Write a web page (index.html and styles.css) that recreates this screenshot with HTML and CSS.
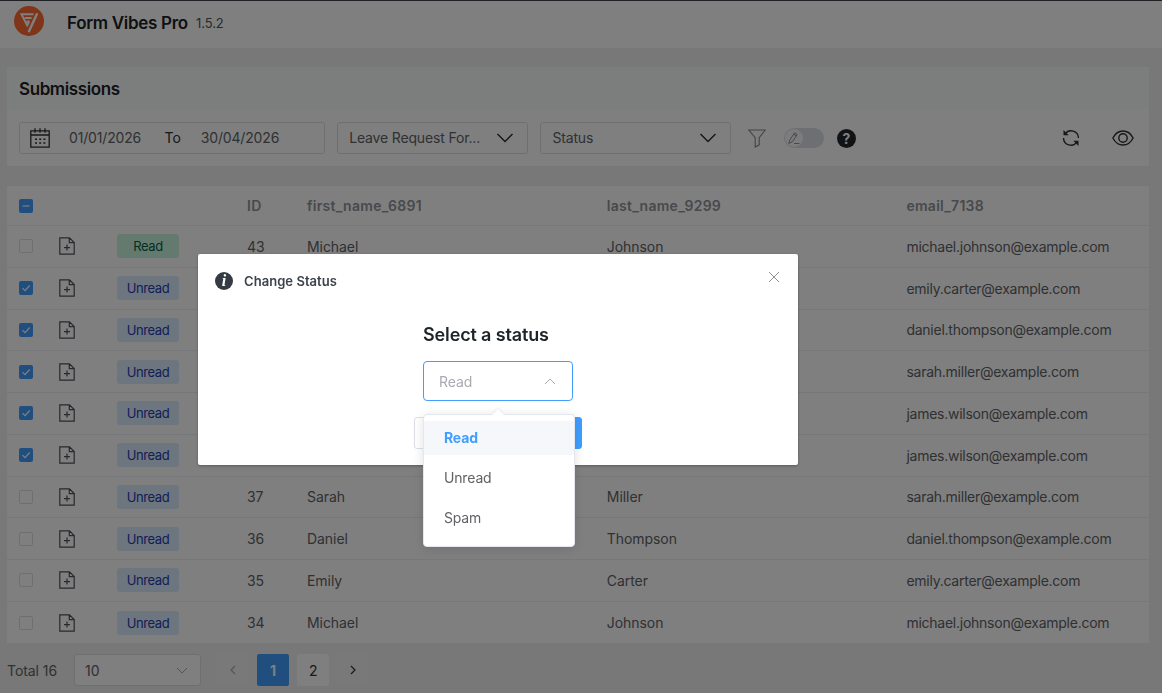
FILE: index.html
```html
<!DOCTYPE html>
<html lang="en">
<head>
<meta charset="utf-8">
<title>Form Vibes Pro</title>
<link rel="stylesheet" href="styles.css">
</head>
<body>
<svg class="defs" width="0" height="0">
  <symbol id="doc" viewBox="0 0 16 18"><path d="M.8.8h9.700l4.700 4.700v11.700H.8zM10.300 1v4.700H15M8 7.600v6M5 10.600h6" fill="none" stroke="currentColor" stroke-width="1.200"/></symbol>
  <symbol id="down" viewBox="0 0 18 10"><path d="M1.500 1l7.500 7.500L16.500 1" fill="none" stroke="currentColor" stroke-width="1.500"/></symbol>
</svg>
<div class="page">
  <header class="topbar">
    <svg class="logo" viewBox="0 0 30 30"><circle cx="15" cy="15" r="15" fill="#ff6a33"/><path d="M19.500 8.200H7.400l5.800 11.200 1.900-3.600M10.800 12h6.800M12.500 15.500h3.200" fill="none" stroke="#fff" stroke-width="1.900"/><path d="M22.800 8.200L15 25.200" fill="none" stroke="#fff" stroke-width="2.500" stroke-linecap="round"/></svg>
    <h1 class="brand">Form Vibes Pro</h1><span class="version">1.5.2</span>
  </header>
  <section class="panel">
    <h2 class="panel-title">Submissions</h2>
    <div class="filters">
      <div class="dates">
        <svg class="calendar" viewBox="0 0 20 20"><path d="M.8 2.800h18.400v16.400H.8zM.8 7h18.400M5 .3v4.500M10 .3v4.500M15 .3v4.500" fill="none" stroke="#303133" stroke-width="1.300"/><path d="M5 11.300h10.500M5 15h10.500" stroke="#303133" stroke-width="1.600" stroke-dasharray="2 2.200"/></svg>
        <span class="date">01/01/2026</span><span class="to">To</span><span class="date">30/04/2026</span>
      </div>
      <div class="select"><span>Leave Request For...</span><svg class="chev"><use href="#down"/></svg></div>
      <div class="select"><span>Status</span><svg class="chev"><use href="#down"/></svg></div>
      <svg class="funnel" viewBox="0 0 18 19"><path d="M.8 1h16.400l-6 7.600v7.200l-4 2.200V8.600z" fill="none" stroke="#85888e" stroke-width="1.100"/></svg>
      <div class="toggle"><div class="knob"><svg viewBox="0 0 14 14"><path d="M1.800 12.500l1-3.500L7.600 1.800l2.600 1.700-4.800 7.200zM6.700 3.200l2.600 1.700M7 12.500h5.500" fill="none" stroke="#909399"/></svg></div></div>
      <div class="help">?</div>
      <div class="spacer"></div>
      <svg class="refresh" viewBox="0 0 18 18"><path d="M3.200 4.800C7.100-.8 16.300 1.800 16.500 9.100M1.500 8.900C1.700 16.200 10.900 18.800 14.800 13.200" fill="none" stroke="#303133" stroke-width="1.400"/><path d="M1.500 1v5.200h5.200zM16.500 17v-5.200h-5.200z" fill="#303133"/></svg>
      <svg class="eye" viewBox="0 0 22 16"><path d="M.9 8C5.500-1.300 16.500-1.300 21.100 8 16.500 17.300 5.500 17.300.9 8z" fill="none" stroke="#303133" stroke-width="1.400"/><circle cx="11" cy="8" r="4.200" fill="none" stroke="#303133" stroke-width="1.400"/></svg>
    </div>
  </section>
  <main class="table" id="table">
    <div class="row head"><span class="check on"><svg viewBox="0 0 14 14"><path d="M3.500 7h7" fill="none" stroke="#fff" stroke-width="1.200"/></svg></span><span></span><span></span><span>ID</span><span>first_name_6891</span><span>last_name_9299</span><span>email_7138</span></div>
  </main>
  <footer class="pager">
    <span class="total">Total 16</span>
    <div class="size"><span>10</span><svg class="chev-s" viewBox="0 0 12 7"><path d="M1 1l5 5 5-5" fill="none" stroke="currentColor"/></svg></div>
    <span class="pg faint"><svg viewBox="0 0 8 10"><path d="M6 1L2 5l4 4" fill="none" stroke="#a8abb2" stroke-width="1.200"/></svg></span>
    <span class="pg active">1</span><span class="pg">2</span>
    <span class="pg faint"><svg viewBox="0 0 8 10"><path d="M2 1l4 4-4 4" fill="none" stroke="#303133" stroke-width="1.200"/></svg></span>
  </footer>
</div>
<div class="overlay">
  <div class="modal">
    <div class="modal-head">
      <span class="info">i</span><span class="modal-title">Change Status</span>
      <svg class="close" viewBox="0 0 12 12"><path d="M1 1l10 10M11 1L1 11" stroke="#909399" stroke-width="1"/></svg>
    </div>
    <div class="modal-body">
      <h3 class="prompt">Select a status</h3>
      <div class="status-select"><span>Read</span><svg class="chev-s up" viewBox="0 0 12 7"><path d="M1 1l5 5 5-5" fill="none" stroke="currentColor"/></svg></div>
    </div>
    <div class="actions"><span class="btn"></span><span class="btn primary"></span></div>
    <div class="menu"><div class="item selected">Read</div><div class="item">Unread</div><div class="item">Spam</div></div>
  </div>
</div>
<script src="table.js"></script>
</body>
</html>
```

FILE: styles.css
```css
* { box-sizing: border-box; }
body { margin: 0; font-family: Inter, "Liberation Sans", sans-serif; font-size: 14px; letter-spacing: -.06px; color: #606266; overflow: hidden; }
h1, h2, h3 { margin: 0; color: #1d2327; font-weight: 600; }
svg { flex: none; display: block; }
.defs { position: absolute; }
.page { height: 693px; background: #f0f0f1; display: flex; flex-direction: column; }
.topbar { height: 48px; background: #fff; border-top: 1px solid #3c434a; display: flex; align-items: center; padding: 0 14px 4px; }
.logo { width: 30px; height: 30px; margin-top: -3px; }
.brand { font-size: 17px; margin-left: 23px; letter-spacing: -.3px; }
.version { font-size: 13px; margin-left: 8px; color: #50555a; }
.panel { margin: 19px 13px 0 7px; height: 99px; background: #fff; }
.panel-title { height: 43px; background: #f9fdfb; padding-left: 12px; font-size: 17px; line-height: 45px; letter-spacing: -.4px; }
.filters { display: flex; align-items: center; padding: 12px 15px 0 12px; }
.dates { width: 306px; height: 32px; border: 1px solid #dcdfe6; border-radius: 3px; display: flex; align-items: center; padding-left: 10px; }
.date { letter-spacing: -.16px; width: 73px; padding-bottom: 1px; }
.calendar { width: 20px; height: 20px; margin-right: 19px; }
.to { color: #303133; margin: 0 20px 0 22.5px; padding-bottom: 1px; }
.select { width: 191px; height: 32px; border: 1px solid #dcdfe6; border-radius: 3px; margin-left: 12.2px; padding: 0 13px 0 11px; display: flex; align-items: center; justify-content: space-between; letter-spacing: -.16px; }
.select span { padding-bottom: 1px; }
.chev { width: 18px; height: 10px; color: #303133; }
.funnel { width: 18px; height: 19px; margin-left: 16.5px; }
.toggle { width: 40px; height: 20px; border-radius: 10px; background: #dcdfe6; margin-left: 18px; padding: 1px; }
.knob { width: 18px; height: 18px; background: #f8f8fa; border-radius: 9px; padding: 2px; }
.help { width: 19px; height: 19px; border-radius: 50%; background: #23282d; color: #fff; font-weight: 700; line-height: 19px; text-align: center; margin-left: 13px; }
.spacer { flex: 1; }
.refresh { width: 18px; height: 18px; }
.eye { width: 22px; height: 16px; margin-left: 32px; }
.table { margin: 20px 13px 0 7px; background: #fff; height: 457px; flex: none; }
.row { display: grid; grid-template-columns: 40px 58px 130px 60px 299.8px 299.6px 1fr; padding-left: 12px; height: 41.75px; align-items: center; border-bottom: 1px solid #ebeef5; }
.row:last-child { border-bottom: 0; }
.row span:last-child { letter-spacing: -.25px; }
.row.head { height: 40px; color: #909399; font-weight: 600; }
.row.head span { letter-spacing: .28px; }
.check { width: 14px; height: 14px; border: 1px solid #dcdfe6; border-radius: 2px; background: #fff; }
.on { background: #409eff; border: 0; }
.doc { width: 16px; height: 18px; color: #50535a; }
.tag { width: 62px; height: 24px; border-radius: 3px; font-size: 13px; letter-spacing: -.4px; line-height: 25px; text-align: center; background: #dbeafe; color: #1e40af; }
.tag.read { background: #c9f5dc; color: #065f46; }
.pager { display: flex; align-items: center; padding: 11px 7px 0; height: 43px; }
.total { width: 67px; }
.size { width: 127px; height: 32px; border: 1px solid #dcdfe6; border-radius: 3px; background: #fff; display: flex; align-items: center; justify-content: space-between; padding: 0 12px 0 10px; margin-right: 16px; }
.chev-s { width: 12px; height: 7px; color: #a8abb2; }
.pg { width: 32px; height: 32px; border-radius: 2px; background: #fff; color: #303133; margin-right: 8.1px; display: flex; align-items: center; justify-content: center; }
.pg svg { width: 8px; height: 10px; }
.faint { background: #f2f2f3; }
.active { background: #409eff; color: #fff; font-weight: 700; }
.overlay { position: fixed; inset: 0; background: rgba(0, 0, 0, .5); }
.modal { position: absolute; left: 198px; top: 254px; width: 600px; height: 211px; background: #fff; border-radius: 2px; box-shadow: 0 1px 3px rgba(0, 0, 0, .3); }
.modal-head { display: flex; align-items: center; padding: 17px 18px 0 17px; height: 36px; }
.info { width: 18px; height: 18px; border-radius: 50%; background: #353b44; color: #fff; font: italic bold 16px/18px "Liberation Serif", serif; text-align: center; }
.modal-title { margin-left: 11px; font-size: 13px; font-weight: 600; letter-spacing: .05px; color: #3c434a; flex: 1; }
.close { width: 12px; height: 12px; margin-top: -7px; }
.modal-body { padding: 34px 0 0 225px; }
.prompt { font-size: 18px; line-height: 22px; letter-spacing: -.14px; }
.status-select { width: 150px; height: 40px; margin-top: 15.4px; border: 1px solid #409eff; border-radius: 4px; display: flex; align-items: center; justify-content: space-between; color: #a8abb2; padding: 0 16px 0 15px; }
.up { transform: rotate(180deg); }
.actions { display: flex; justify-content: space-between; width: 168px; margin: 15.6px 0 0 216px; }
.btn { width: 76px; height: 32px; border: 1px solid #dcdfe6; border-radius: 3px; }
.primary { background: #409eff; border-color: #409eff; }
.menu { position: absolute; left: 225px; top: 160px; width: 152px; height: 133px; padding-top: 6px; background: #fff; border: 1px solid #e4e7ed; border-radius: 4px; box-shadow: 0 2px 12px rgba(0, 0, 0, .12); }
.menu::before { content: ""; position: absolute; left: 68px; top: -6px; border: 6px solid transparent; border-top: 0; border-bottom-color: #fff; filter: drop-shadow(0 -1px 1px rgba(0, 0, 0, .08)); }
.item { height: 34px; line-height: 33px; padding-left: 20px; margin-bottom: 6px; letter-spacing: -.16px; }
.selected { background: #f5f7fa; color: #409eff; font-weight: 700; }
```

FILE: table.js
```js
const rows = [
  [43, "Michael", "Johnson", "michael.johnson", false],
  ["", "", "", "emily.carter", true],
  ["", "", "", "daniel.thompson", true],
  ["", "", "", "sarah.miller", true],
  ["", "", "", "james.wilson", true],
  ["", "", "", "james.wilson", true],
  [37, "Sarah", "Miller", "sarah.miller", false],
  [36, "Daniel", "Thompson", "daniel.thompson", false],
  [35, "Emily", "Carter", "emily.carter", false],
  [34, "Michael", "Johnson", "michael.johnson", false]
];
const tick = '<svg viewBox="0 0 14 14"><path d="M3.500 7.200l2.500 2.500 4.700-5.200" fill="none" stroke="#fff" stroke-width="1.200"/></svg>';
document.getElementById("table").insertAdjacentHTML("beforeend", rows.map(([id, first, last, mail, on], i) =>
  `<div class="row"><span class="check ${on ? "on" : ""}">${on ? tick : ""}</span><svg class="doc"><use href="#doc"/></svg><span class="tag ${i ? "" : "read"}">${i ? "Unread" : "Read"}</span><span>${id}</span><span>${first}</span><span>${last}</span><span>${mail}@example.com</span></div>`).join(""));
```
